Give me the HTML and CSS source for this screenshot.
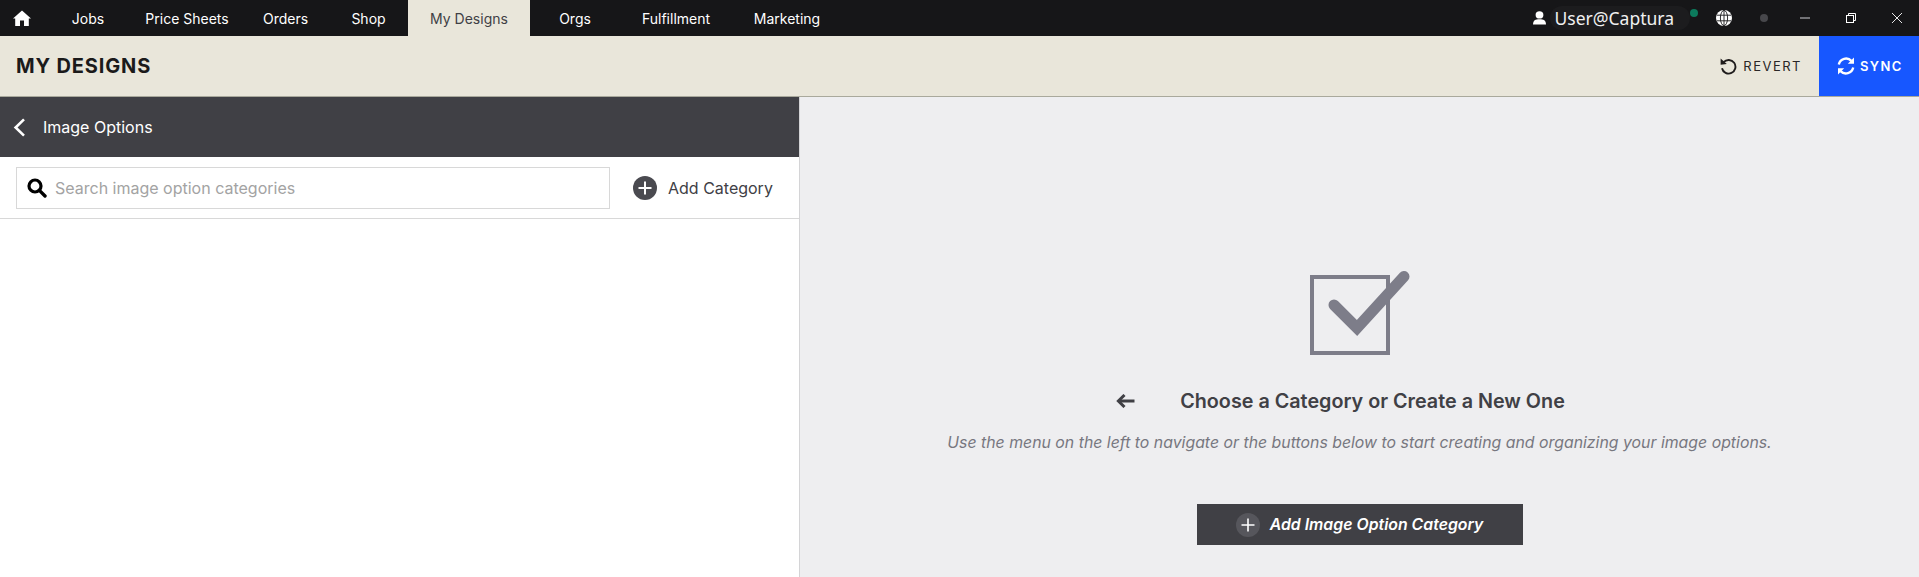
FILE: index.html
```html
<!doctype html>
<html>
<head>
<meta charset="utf-8">
<title>My Designs</title>
<link rel="stylesheet" href="styles.css">
</head>
<body>
<div id="wrap">
	<header class="topbar">
		<nav class="nav">
			<a class="nav_item nav_home" href="#">
				<svg width="18" height="16" viewBox="0 0 18 16"><path d="M9 0.5 L18 8.6 L15.8 8.6 L15.8 16 L11 16 L11 10.5 L7 10.5 L7 16 L2.2 16 L2.2 8.6 L0 8.6 Z" fill="#fff"/></svg>
			</a>
			<a class="nav_item nav_jobs" href="#">Jobs</a>
			<a class="nav_item nav_price" href="#">Price Sheets</a>
			<a class="nav_item nav_orders" href="#">Orders</a>
			<a class="nav_item nav_shop" href="#">Shop</a>
			<a class="nav_item nav_designs active" href="#">My Designs</a>
			<a class="nav_item nav_orgs" href="#">Orgs</a>
			<a class="nav_item nav_fulfil" href="#">Fulfillment</a>
			<a class="nav_item nav_marketing" href="#">Marketing</a>
		</nav>
		<div class="status">
			<svg class="user_icon" width="13" height="14" viewBox="0 0 13 14"><ellipse cx="6.5" cy="3.9" rx="3.9" ry="3.7" fill="#fff"/><path d="M0 13.5 C0 9.4 2.4 8.2 6.5 8.2 C10.6 8.2 13 9.4 13 13.5 Z" fill="#fff"/></svg>
			<span class="user_name">User@Captura</span>
			<span class="dot_green"></span>
			<svg class="globe" width="16" height="16" viewBox="0 0 16 16" fill="none" stroke="#161618" stroke-width="0.9"><circle cx="8" cy="8" r="8" fill="#fff" stroke="none"/><ellipse cx="8" cy="8" rx="3.6" ry="7.6"/><path d="M8 0.4 V15.6 M0.8 5.2 H15.2 M0.8 10.8 H15.2"/></svg>
			<span class="dot_grey"></span>
			<div class="win_btns">
				<svg width="10" height="10" viewBox="0 0 10 10"><path d="M0 5 H10" stroke="#9a9a9e" stroke-width="1.4"/></svg>
				<svg width="10" height="10" viewBox="0 0 10 10" fill="none" stroke="#fff" stroke-width="1"><rect x="0.5" y="2.5" width="7" height="7"/><path d="M2.5 2.5 V0.5 H9.5 V7.5 H7.5"/></svg>
				<svg width="10" height="10" viewBox="0 0 10 10"><path d="M0 0 L10 10 M10 0 L0 10" stroke="#fff" stroke-width="0.9"/></svg>
			</div>
		</div>
	</header>
	<div class="subbar">
		<h1 class="page_title">MY DESIGNS</h1>
		<div class="sub_actions">
			<a class="revert" href="#">
				<svg width="17" height="17" viewBox="0 0 17 17" fill="none"><path d="M3.6 4.2 A6.8 6.8 0 1 1 2 10.2" stroke="#1f1c1c" stroke-width="1.9"/><path d="M0.6 0.6 L6.8 6 L0.6 6.8 Z" fill="#1f1c1c"/></svg>
				<span>REVERT</span>
			</a>
			<a class="sync" href="#">
				<svg width="18" height="18" viewBox="0 0 18 18" fill="none" stroke="#fff" stroke-width="2.4"><path d="M1.8 7.4 A7.4 7.4 0 0 1 14.4 3.9"/><path d="M16.2 10.6 A7.4 7.4 0 0 1 3.6 14.1"/><path d="M17 0.6 V6.8 H10.8 Z" fill="#fff" stroke="none"/><path d="M1 17.4 V11.2 H7.2 Z" fill="#fff" stroke="none"/></svg>
				<span>SYNC</span>
			</a>
		</div>
	</div>
	<div class="main">
		<aside class="side">
			<div class="side_head">
				<svg width="13" height="19" viewBox="0 0 13 19" fill="none"><path d="M11 1.4 L2.6 9.5 L11 17.6" stroke="#fff" stroke-width="2.6"/></svg>
				<span>Image Options</span>
			</div>
			<div class="side_tools">
				<div class="search">
					<svg width="20" height="20" viewBox="0 0 20 20" fill="none"><circle cx="8" cy="8" r="6" stroke="#000" stroke-width="3.2"/><path d="M12.4 12.4 L18 18" stroke="#000" stroke-width="3.4" stroke-linecap="round"/></svg>
					<span class="placeholder">Search image option categories</span>
				</div>
				<a class="add_cat" href="#">
					<svg width="24" height="24" viewBox="0 0 24 24"><circle cx="12" cy="12" r="12" fill="#4a4a50"/><path d="M12 5.5 V18.5 M5.5 12 H18.5" stroke="#fff" stroke-width="2"/></svg>
					<span>Add Category</span>
				</a>
			</div>
		</aside>
		<section class="empty">
			<svg class="check_icon" width="100" height="86" viewBox="0 0 100 86" fill="none">
				<rect x="2" y="8" width="76" height="76" stroke="#7d7d89" stroke-width="4"/>
				<path d="M24 36 L47 59 L94 7.5" stroke="#7d7d89" stroke-width="11" stroke-linecap="round"/>
			</svg>
			<div class="choose">
				<svg width="19" height="14" viewBox="0 0 19 14" fill="none"><path d="M18.5 7 H4" stroke="#404045" stroke-width="3"/><path d="M8.5 1 L2.4 7 L8.5 13" stroke="#404045" stroke-width="3"/></svg>
				<h2>Choose a Category or Create a New One</h2>
			</div>
			<p class="hint">Use the menu on the left to navigate or the buttons below to start creating and organizing your image options.</p>
			<a class="add_btn" href="#">
				<svg width="24" height="24" viewBox="0 0 24 24"><circle cx="12" cy="12" r="12" fill="#56565c"/><path d="M12 5.5 V18.5 M5.5 12 H18.5" stroke="#fff" stroke-width="1.6"/></svg>
				<span>Add Image Option Category</span>
			</a>
		</section>
	</div>
</div>
</body>
</html>
```

FILE: styles.css
```css
html,body{margin: 0; padding: 0;}
body{
	font-family: "Inter","Liberation Sans",sans-serif;
	font-size: 14px;
	overflow: hidden;
}
a{text-decoration: none; color: inherit;}
h1,h2,p{margin: 0; padding: 0;}
svg{display: block; flex: none;}
#wrap{
	width: 1919px;
	height: 577px;
	display: flex;
	flex-direction: column;
	overflow: hidden;
}
.topbar{
	display: flex;
	justify-content: space-between;
	height: 36px;
	background-color: #161618;
	color: #fff;
}
.nav{
	display: flex;
}
.nav_item{
	display: flex;
	align-items: center;
	justify-content: center;
	height: 36px;
	font-size: 14px;
}
.nav_home{width: 44px;}
.nav_jobs{width: 88px;}
.nav_price{width: 110px;}
.nav_orders{width: 87px;}
.nav_shop{width: 79px;}
.nav_designs{width: 122px;}
.nav_orgs{width: 90px;}
.nav_fulfil{width: 112px;}
.nav_marketing{width: 110px;}
.active{
	background-color: #e9e6da;
	color: #404045;
}
.status{
	display: flex;
	align-items: center;
	padding-right: 17px;
}
.user_name{
	font-family: "Noto Sans",sans-serif;
	font-size: 17.5px;
	line-height: 24px;
	margin-left: 4px;
	padding: 0 16px 0 5px;
	border-radius: 12px;
	background-color: #1c1c1e;
	color: #f0f0f0;
}
.dot_green{
	width: 8px;
	height: 8px;
	border-radius: 50%;
	background-color: #0c7a5c;
	margin: -11px 0 0 0;
}
.globe{
	margin-left: 18px;
}
.dot_grey{
	width: 8px;
	height: 8px;
	border-radius: 50%;
	background-color: #47474b;
	margin-left: 28px;
}
.win_btns{
	display: flex;
	align-items: center;
	gap: 36px;
	margin-left: 32px;
}
.subbar{
	display: flex;
	justify-content: space-between;
	align-items: center;
	height: 60px;
	padding-left: 16px;
	background-color: #e9e6da;
	border-bottom: 1px solid #a9a99c;
}
.page_title{
	font-size: 20px;
	font-weight: 700;
	letter-spacing: 0.85px;
	color: #1b1a1a;
}
.sub_actions{
	display: flex;
	align-items: stretch;
	height: 60px;
}
.revert{
	display: flex;
	align-items: center;
	gap: 6px;
	margin-right: 17px;
	font-size: 13px;
	letter-spacing: 1.5px;
	color: #2a2626;
}
.sync{
	display: flex;
	align-items: center;
	gap: 5px;
	width: 100px;
	padding-left: 18px;
	box-sizing: border-box;
	background-color: #1757ff;
	color: #fff;
	font-size: 13px;
	font-weight: 600;
	letter-spacing: 1.4px;
}
.main{
	display: flex;
	flex: 1;
	min-height: 0;
}
.side{
	width: 799px;
	background-color: #fff;
	border-right: 1px solid #d4d4d6;
}
.side_head{
	display: flex;
	align-items: center;
	height: 60px;
	padding-left: 13px;
	background-color: #404045;
	color: #fff;
	font-size: 16px;
}
.side_head span{
	margin-left: 17px;
}
.side_tools{
	display: flex;
	align-items: center;
	height: 61px;
	padding-left: 16px;
	border-bottom: 1px solid #d8d8d8;
}
.search{
	display: flex;
	align-items: center;
	width: 594px;
	height: 42px;
	box-sizing: border-box;
	padding-left: 10px;
	border: 1px solid #d8d8d8;
}
.placeholder{
	margin-left: 8px;
	font-size: 16px;
	color: #a3a3a3;
}
.add_cat{
	display: flex;
	align-items: center;
	gap: 11px;
	margin-left: 23px;
	font-size: 16px;
	color: #404045;
}
.empty{
	flex: 1;
	display: flex;
	flex-direction: column;
	align-items: center;
	padding-top: 172px;
	background-color: #eeeef0;
}
.choose{
	display: flex;
	align-items: center;
	gap: 45px;
	margin: 34px 38px 0 0;
}
.choose h2{
	font-size: 19.75px;
	font-weight: 600;
	color: #404045;
}
.hint{
	margin-top: 20px;
	font-size: 15.85px;
	font-style: italic;
	color: #77777f;
}
.add_btn{
	display: flex;
	align-items: center;
	justify-content: center;
	gap: 10px;
	width: 326px;
	height: 41px;
	margin-top: 52px;
	background-color: #404045;
	color: #fff;
	font-size: 15.85px;
	font-weight: 600;
	font-style: italic;
}
```
